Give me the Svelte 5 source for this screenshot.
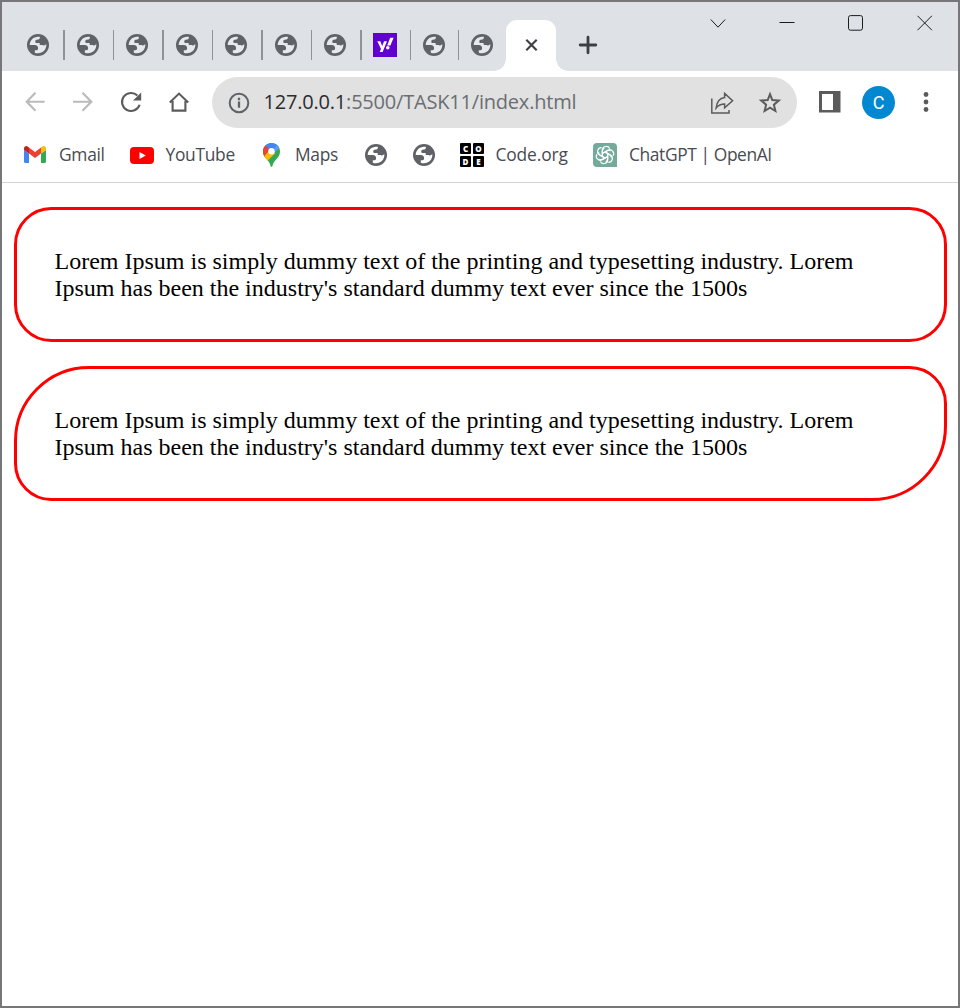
<script>
  const tabs = [
    { kind: 'globe', w: 49.5 }, { kind: 'globe', w: 49.5 }, { kind: 'globe', w: 49.5 },
    { kind: 'globe', w: 49.5 }, { kind: 'globe', w: 49.5 }, { kind: 'globe', w: 49.5 },
    { kind: 'globe', w: 49.5 }, { kind: 'yahoo', w: 49.5 }, { kind: 'globe', w: 48 },
    { kind: 'globe', w: 46.5 }
  ];
  const lorem = "Lorem Ipsum is simply dummy text of the printing and typesetting industry. Lorem Ipsum has been the industry's standard dummy text ever since the 1500s";
</script>

{#snippet globe()}
  <svg class="globe" width="22" height="22" viewBox="0 0 22 22">
    <circle cx="11" cy="11" r="11" fill="#5f6368" />
    <path class="land" transform="translate(11 11) scale(.94) translate(-11 -11)" d="M2.2 10.4C2.5 5.8 6.2 2.2 11 2.1L12.8 2.3L13 3.4C12.9 4.3 12.3 5.1 11.4 5.2L9.4 5.5C8.4 5.7 8.1 6.5 8.1 7.6C8.1 8.4 8.6 8.9 9.5 8.9H11.8C12.6 8.9 12.9 9.4 12.9 10.3V11.1H15.1C16.2 11.1 16.7 11.6 17.4 11.6C18.5 11.6 18.8 10.5 19.9 10.3C20.1 15.8 16.2 19.9 11 19.9C9.7 19.9 8.7 19.7 7.6 19.2V16.5H9.2C10.5 16.5 11.1 15.6 11.1 14.4C11.1 12.5 9.8 11.1 7.8 11.1H2.2Z" />
  </svg>
{/snippet}

<div class="window">
  <header class="strip">
    <div class="tabs">
      {#each tabs as tab, i}
        <div class="tab" class:sep={i < tabs.length - 1} style="width: {tab.w}px">
          {#if tab.kind === 'globe'}
            {@render globe()}
          {:else}
            <svg class="yahoo" width="24" height="24" viewBox="0 0 24 24">
              <rect width="24" height="24" fill="#6001d2" />
              <path d="M4.3 8.2H7.3L9.2 13L11.1 8.2H14L9.6 19H6.7L8 16.1Z" fill="#fff" />
              <path d="M17.2 4.8H20.6L17.4 12.5H14.2Z" fill="#fff" />
              <circle cx="14.8" cy="14.8" r="1.8" fill="#fff" />
            </svg>
          {/if}
        </div>
      {/each}
      <div class="tab active">
        <svg width="13" height="12" viewBox="0 0 12 12"><path d="M.8 .8L11.2 11.2M11.2 .8L.8 11.2" stroke="#3c4043" stroke-width="2.1" /></svg>
      </div>
      <svg class="plus" width="18" height="18" viewBox="0 0 18 18"><path d="M9 1.2V16.8M1.2 9H16.8" stroke="#3c4043" stroke-width="2.8" stroke-linecap="round" /></svg>
    </div>
    <div class="controls">
      <svg width="16" height="16" viewBox="0 0 16 16"><path d="M.8 4.5L8 12.2L15.2 4.5" /></svg>
      <svg width="16" height="16" viewBox="0 0 16 16"><path d="M.5 7.5H15.5" /></svg>
      <svg width="16" height="16" viewBox="0 0 16 16"><rect x=".5" y=".6" width="14" height="14.6" rx="2" /></svg>
      <svg width="16" height="16" viewBox="0 0 16 16"><path d="M.5 .8L14.9 15.2M14.9 .8L.5 15.2" /></svg>
    </div>
  </header>

  <nav class="toolbar">
    <svg class="dim" width="24" height="24" viewBox="0 0 24 24"><path d="M21.7 11.7H4M12.5 2.7L3.7 11.7L12.5 20.7" /></svg>
    <svg class="dim" width="24" height="24" viewBox="0 0 24 24"><path d="M2 11.7H19.7M11.5 2.7L20.3 11.7L11.5 20.7" /></svg>
    <svg width="24" height="24" viewBox="0 0 24 24"><path d="M20.6 14.7A9 9 0 1 1 18.4 5.6" /><path class="solid" d="M22.2 2.4V10.6H14Z" /></svg>
    <svg width="24" height="24" viewBox="0 0 24 24"><path d="M2.8 12.6L12 3.6L21.2 12.6M5.6 11V20.6H18.4V11" /></svg>
    <div class="omnibox">
      <svg class="info" width="22" height="22" viewBox="0 0 22 22"><circle cx="11" cy="11" r="9.3" /><path d="M11 9.6V15.8M11 5.8V8.2" /></svg>
      <span class="url"><b>127.0.0.1</b>:5500/TASK11/index.html</span>
      <svg class="share" width="24" height="24" viewBox="0 0 24 24"><path d="M1.8 7.5V22H19V19M14.6 2.4L22.6 9.8L14.6 16.8V13C10.7 13 8.5 14 6.1 17C6.8 11.3 9.5 7.2 14.6 6.6Z" /></svg>
      <svg class="star" width="24" height="24" viewBox="0 0 24 24"><path d="M12 3.2L14.3 9L20.8 9.5L15.9 13.7L17.4 20L12 16.7L6.6 20L8.1 13.7L3.2 9.5L9.7 9Z" /></svg>
    </div>
    <svg class="panel" width="22" height="22" viewBox="0 0 22 22"><rect width="21.5" height="21.5" fill="#5b5b5b" /><rect x="3" y="3" width="11" height="16" fill="#fff" /></svg>
    <span class="avatar">C</span>
    <svg class="dots" width="6" height="20" viewBox="0 0 6 20"><circle cx="3" cy="2.5" r="2.4" /><circle cx="3" cy="10" r="2.4" /><circle cx="3" cy="17.5" r="2.4" /></svg>
  </nav>

  <nav class="bookmarks">
    <div class="mark gmail">
      <svg width="22" height="17" viewBox="0 0 22 17">
        <path d="M0 4L5 7.5V17H1.5Q0 17 0 15.5Z" fill="#4285f4" />
        <path d="M22 4L17 7.5V17H20.5Q22 17 22 15.5Z" fill="#34a853" />
        <path d="M5 1.5L11 6L17 1.5V7.5L11 12L5 7.5Z" fill="#ea4335" />
        <path d="M0 4V2.5C0 .3 2.3-.7 4 .7L5 1.5V7.5L0 4Z" fill="#c5221f" />
        <path d="M22 4V2.5C22 .3 19.7-.7 18 .7L17 1.5V7.5L22 4Z" fill="#fbbc04" />
      </svg><span style="letter-spacing: -.3px">Gmail</span>
    </div>
    <div class="mark youtube">
      <svg width="24" height="17" viewBox="0 0 24 17"><rect width="24" height="17" rx="4" fill="#f00" /><path d="M9.5 5L15.8 8.5L9.5 12Z" fill="#fff" /></svg><span style="letter-spacing: -.3px">YouTube</span>
    </div>
    <div class="mark maps">
      <svg width="17" height="24" viewBox="0 0 17 24">
        <defs><clipPath id="pin"><path d="M8.5 0C3.7 0 0 3.7 0 8.4C0 11 1 12.8 2.4 14.7C4.8 17.7 6.7 19 7.4 22.5C7.7 24.3 9.3 24.3 9.6 22.5C10.3 19 12.2 17.7 14.6 14.7C16 12.8 17 11 17 8.4C17 3.7 13.3 0 8.5 0Z" /></clipPath></defs>
        <g clip-path="url(#pin)">
          <rect width="17" height="24" fill="#34a853" />
          <path d="M0 0H17V4L8.5 8.5Z" fill="#4285f4" />
          <path d="M11.5 0H17V4.5L8.5 12.5L8.5 8.5L14 2Z" fill="#5a9af8" />
          <path d="M0 1L2 2L8.5 8.3L2 16L0 14Z" fill="#ea4335" />
          <path d="M1 13.5L8.5 5L12 10.5L4.2 18Z" fill="#fbbc04" />
        </g>
        <circle cx="8.5" cy="8.3" r="3.2" fill="#fff" />
      </svg><span style="letter-spacing: -.3px">Maps</span>
    </div>
    <div class="mark g1">{@render globe()}</div>
    <div class="mark g2">{@render globe()}</div>
    <div class="mark code">
      <div class="tiles"><i>C</i><i>O</i><i>D</i><i>E</i></div><span style="letter-spacing: -.15px">Code.org</span>
    </div>
    <div class="mark gpt">
      <svg width="24" height="24" viewBox="0 0 24 24">
        <path d="M4 0H20Q24 0 24 4V24H4Q0 24 0 20V4Q0 0 4 0Z" fill="#74aa9c" />
        <g fill="none" stroke="#fff" stroke-width="1.2" stroke-linejoin="round">
          {#each [0, 60, 120, 180, 240, 300] as a}
            <path transform="rotate({a} 12 12)" d="M9.3 13.6V7.3C9.3 3 15 2 16.7 5.4M9.3 10.5L13.8 7.9Q15.8 6.8 17.7 7.8" />
          {/each}
        </g>
      </svg><span style="letter-spacing: -.4px">ChatGPT | OpenAI</span>
    </div>
  </nav>

  <main>
    <p class="even">{lorem}</p>
    <p class="leaf">{lorem}</p>
  </main>
</div>

<style>
  :global(body) { margin: 0; background: #fff; }
  .window { box-sizing: border-box; height: 1008px; border: 2px solid #777779; overflow: hidden; background: #fff; font-family: "Open Sans", "Noto Sans", sans-serif; }
  svg { display: block; flex: none; overflow: visible; }
  .strip { display: flex; justify-content: space-between; height: 69px; background: #dee1e6; }
  .tabs { display: flex; align-items: flex-end; padding-left: 13px; }
  .tab { box-sizing: border-box; height: 51px; display: flex; align-items: center; padding: 0 0 1px 12px; position: relative; flex: none; }
  .land { fill: #e6e9ed; }
  .bookmarks .land { fill: #fff; }
  .yahoo { margin-left: -.5px; }
  .sep::after { content: ""; position: absolute; right: 0; top: 10px; width: 1.5px; height: 30px; background: #8f9297; }
  .active { width: 50px; margin-left: .5px; padding: 0 0 1px; justify-content: center; background: #fff; border-radius: 11px 11px 0 0; }
  .active::before, .active::after { content: ""; position: absolute; bottom: 0; width: 12px; height: 12px; }
  .active::before { left: -12px; background: radial-gradient(circle at 0 0, transparent 11.5px, #fff 12px); }
  .active::after { right: -12px; background: radial-gradient(circle at 100% 0, transparent 11.5px, #fff 12px); }
  .plus { margin: 0 0 17px 23.4px; }
  .controls { display: flex; gap: 53px; padding: 13px 25.5px 0 0; }
  .controls path, .controls rect { fill: none; stroke: #1c1c1c; stroke-width: 1; }
  .toolbar { display: flex; align-items: center; height: 62px; padding-left: 21px; }
  .toolbar > svg:nth-child(-n+4) { margin-right: 24px; }
  .toolbar path { fill: none; stroke: #5b5b5b; stroke-width: 2.1; }
  .toolbar .dim path { stroke: #bababa; }
  .toolbar .solid { fill: #5b5b5b; stroke: none; }
  .omnibox { box-sizing: border-box; width: 585px; height: 51px; margin-left: -3px; border-radius: 26px; background: #e1e1e1; display: flex; align-items: center; padding: 1px 15px 0 16px; }
  .info circle { fill: none; stroke: #5f6368; stroke-width: 2; }
  .toolbar .info path { stroke: #5f6368; stroke-width: 2.3; }
  .url { margin: -2px 0 0 13.5px; width: 446.5px; font-size: 20px; line-height: 28px; color: #6a6e73; white-space: nowrap; letter-spacing: -.2px; }
  .url b { font-weight: 400; color: #2b2c2f; }
  .toolbar .share path { stroke-width: 1.5; }
  .star { margin-left: 24px; }
  .star path { stroke-width: 2; }
  .panel { margin-left: 22px; }
  .avatar { width: 33px; height: 33px; margin-left: 21px; border-radius: 50%; background: #0288d1; color: #fff; font: 18px/34px Roboto, sans-serif; text-align: center; }
  .dots { margin-left: 28px; fill: #5b5b5b; }
  .bookmarks { box-sizing: border-box; height: 50px; border-bottom: 1px solid #d4d4d4; display: flex; align-items: center; padding: 0 0 6px 22px; font-size: 17.4px; color: #484c50; }
  .mark { display: flex; align-items: center; flex: none; white-space: nowrap; }
  .mark span { line-height: 24px; margin-top: -2px; }
  .gmail { width: 106px; gap: 13px; }
  .youtube { width: 132.5px; gap: 11.5px; }
  .youtube svg { margin-top: 1px; }
  .maps { width: 102.5px; gap: 15.5px; }
  .g1 { width: 48px; }
  .g2 { width: 47px; }
  .code { width: 133px; gap: 11.5px; }
  .gpt { gap: 12px; }
  .tiles { display: grid; grid-template-columns: 11px 11px; grid-auto-rows: 11px; gap: 2px; }
  .tiles i { background: #000; color: #fff; border-radius: 1px; font: 800 8px/11px "Open Sans", sans-serif; text-align: center; }
  main { padding: 24px 11px 0 12px; }
  p { margin: 0 0 24px; box-sizing: border-box; height: 135px; padding: 37.5px; border: 3px solid #f00; border-radius: 37.5px; font: 24px/27px "Liberation Serif", "Times New Roman", serif; color: #000; }
  .leaf { border-radius: 75px 37.5px; }
</style>
